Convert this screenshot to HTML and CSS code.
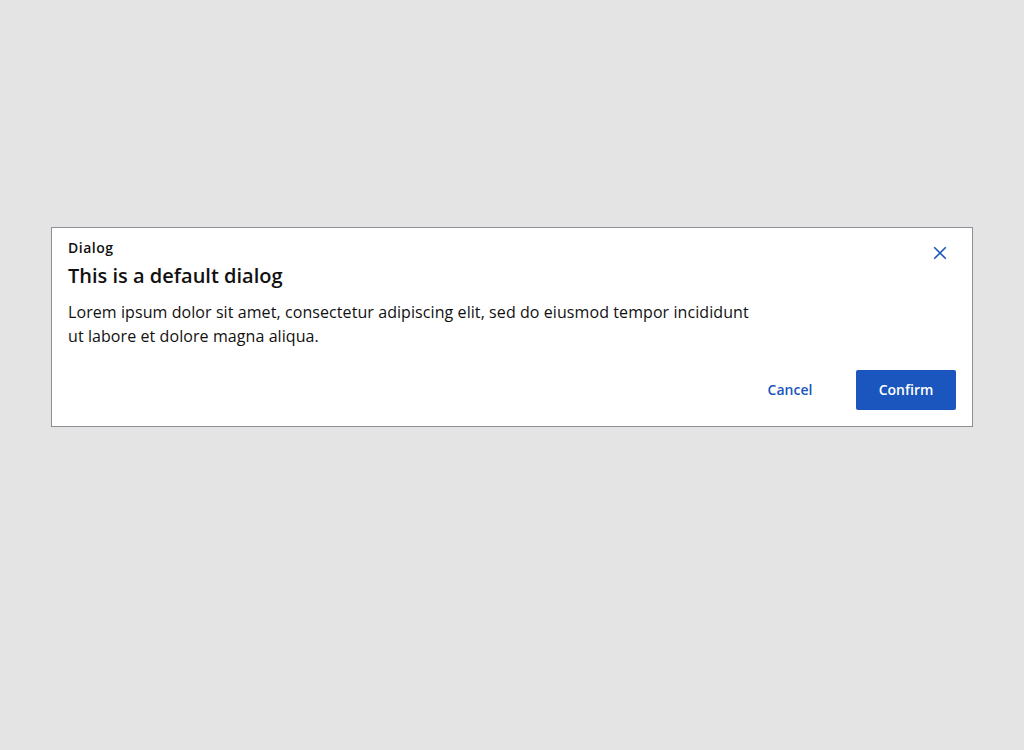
FILE: index.html
```html
<!DOCTYPE html>
<html>
<head>
<meta charset="utf-8">
<link rel="stylesheet" href="styles.css">
</head>
<body>
<div class="dialog" role="dialog">
  <div class="head">
    <div class="titles">
      <div class="label">Dialog</div>
      <h2 class="title">This is a default dialog</h2>
    </div>
    <button class="close" aria-label="Close">
      <svg width="16" height="16" viewBox="0 0 16 16"><path d="M2.2 2.2L13.8 13.8M13.8 2.2L2.2 13.8" stroke="#1a56be" stroke-width="1.6" fill="none"/></svg>
    </button>
  </div>
  <p class="body">Lorem ipsum dolor sit amet, consectetur adipiscing elit, sed do eiusmod tempor incididunt ut labore et dolore magna aliqua.</p>
  <div class="actions">
    <button class="btn ghost">Cancel</button>
    <button class="btn primary">Confirm</button>
  </div>
</div>
</body>
</html>
```
FILE: styles.css
```css
html, body {
  margin: 0;
  padding: 0;
  background: #e4e4e4;
  font-family: "Open Sans", "Liberation Sans", sans-serif;
  color: #111;
}
body {
  padding: 227px 51px 0;
}
.dialog {
  background: #fff;
  border: 1px solid #8e8e96;
  padding: 10px 16px 16px;
  box-sizing: border-box;
  height: 200px;
  display: flex;
  flex-direction: column;
}
.head {
  display: flex;
  justify-content: space-between;
  align-items: flex-start;
}
.label {
  font-size: 14px;
  font-weight: 600;
  line-height: 20px;
  letter-spacing: 0.5px;
}
.title {
  margin: 4px 0 0;
  font-size: 20px;
  font-weight: 600;
  line-height: 28px;
}
.close {
  border: none;
  background: none;
  padding: 0;
  width: 32px;
  height: 32px;
  display: flex;
  align-items: center;
  justify-content: center;
  margin-top: -1px;
  cursor: pointer;
}
.body {
  margin: 10px 0 0;
  font-size: 16px;
  line-height: 24px;
  letter-spacing: 0.08px;
  max-width: 700px;
}
.actions {
  margin-top: auto;
  display: flex;
  justify-content: flex-end;
  gap: 16px;
}
.btn {
  width: 100px;
  height: 40px;
  border: none;
  border-radius: 2px;
  padding: 0 0 2px;
  font-family: "Open Sans", "Liberation Sans", sans-serif;
  font-size: 14px;
  font-weight: 600;
  cursor: pointer;
}
.ghost {
  background: transparent;
  color: #1a56be;
}
.primary {
  background: #1a56be;
  color: #fff;
}
```
